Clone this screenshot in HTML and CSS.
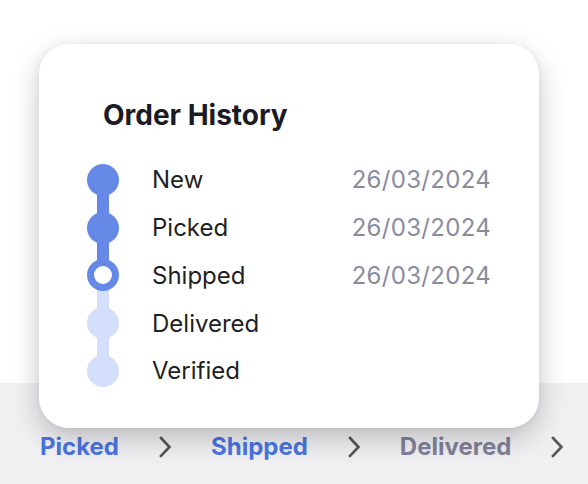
FILE: index.html
```html
<!DOCTYPE html>
<html>
<head>
<meta charset="utf-8">
<link rel="stylesheet" href="styles.css">
</head>
<body>
<div class="page">
  <div class="top"></div>
  <nav class="crumbs">
    <span class="chev"><svg width="14" height="24" viewBox="0 0 14 24"><path d="M3 3 L11.5 12 L3 21" fill="none" stroke="#555" stroke-width="2.6" stroke-linecap="square"/></svg></span>
    <span class="crumb done">Picked</span>
    <span class="chev"><svg width="14" height="24" viewBox="0 0 14 24"><path d="M3 3 L11.5 12 L3 21" fill="none" stroke="#555" stroke-width="2.6" stroke-linecap="square"/></svg></span>
    <span class="crumb done">Shipped</span>
    <span class="chev"><svg width="14" height="24" viewBox="0 0 14 24"><path d="M3 3 L11.5 12 L3 21" fill="none" stroke="#555" stroke-width="2.6" stroke-linecap="square"/></svg></span>
    <span class="crumb todo">Delivered</span>
    <span class="chev"><svg width="14" height="24" viewBox="0 0 14 24"><path d="M3 3 L11.5 12 L3 21" fill="none" stroke="#555" stroke-width="2.6" stroke-linecap="square"/></svg></span>
  </nav>
  <div class="card">
    <h2 class="title">Order History</h2>
    <ul class="steps">
      <li class="step active first"><span class="dot"></span><span class="label">New</span><span class="date">26/03/2024</span></li>
      <li class="step active"><span class="dot"></span><span class="label">Picked</span><span class="date">26/03/2024</span></li>
      <li class="step current"><span class="dot"></span><span class="label">Shipped</span><span class="date">26/03/2024</span></li>
      <li class="step pending"><span class="dot"></span><span class="label">Delivered</span></li>
      <li class="step pending last"><span class="dot"></span><span class="label">Verified</span></li>
    </ul>
  </div>
</div>
</body>
</html>
```
FILE: styles.css
```css
* { box-sizing: border-box; }
html, body { margin: 0; padding: 0; background: #fff; }
body { font-family: Inter, "Noto Sans", sans-serif; width: 588px; height: 484px; overflow: hidden; }
.page { position: relative; width: 588px; height: 484px; display: flex; flex-direction: column; }
.top { height: 383px; background: #fff; }
.crumbs {
  flex: 1;
  background: #f0f0f3;
  display: flex;
  align-items: center;
  gap: 39px;
  margin-left: -13px;
  padding-top: 26px;
  white-space: nowrap;
}
.chev { display: flex; width: 14px; height: 24px; }
.crumb { font-size: 24px; font-weight: 700; line-height: 28px; }
.crumb.done { color: #4a74e0; }
.crumb.todo { color: #81819a; }
.card {
  position: absolute;
  left: 39px;
  top: 44px;
  width: 500px;
  height: 384px;
  background: #fff;
  border-radius: 30px;
  box-shadow: 0 10px 28px rgba(0,0,0,0.22), 0 0 6px rgba(0,0,0,0.05);
  padding: 54px 48px 0 48px;
}
.title { margin: 0 0 0 16px; font-size: 28px; font-weight: 700; color: #1b1b26; line-height: 34px; letter-spacing: 0; }
.steps { list-style: none; margin: 24px 0 0 0; padding: 0; }
.step { display: flex; align-items: center; height: 47.75px; position: relative; }
.dot { width: 32px; height: 32px; border-radius: 50%; flex: none; margin-right: 33px; position: relative; z-index: 1; }
.step::before { content: ""; position: absolute; left: 10px; width: 12px; top: -24px; height: 48px; }
.step.first::before { display: none; }
.step.active .dot { background: #6689e8; }
.step.current .dot { background: #fff; border: 7.5px solid #6689e8; }
.step.pending .dot { background: #d3dffb; }
.step.active::before, .step.current::before { background: #6689e8; }
.step.pending::before { background: #d3dffb; }
.label { font-size: 24px; color: #1f1f24; flex: 1; line-height: 31px; }
.date { font-size: 24px; color: #8b8ba0; line-height: 31px; letter-spacing: 0.3px; }
```
